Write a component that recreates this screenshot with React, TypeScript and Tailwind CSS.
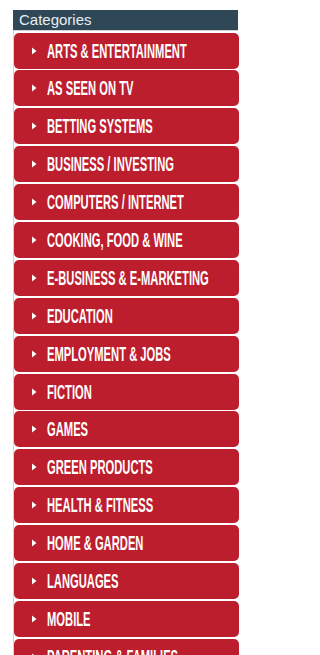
const categories = [
  "Arts & Entertainment",
  "As Seen On TV",
  "Betting Systems",
  "Business / Investing",
  "Computers / Internet",
  "Cooking, Food & Wine",
  "E-Business & E-Marketing",
  "Education",
  "Employment & Jobs",
  "Fiction",
  "Games",
  "Green Products",
  "Health & Fitness",
  "Home & Garden",
  "Languages",
  "Mobile",
  "Parenting & Families",
];

function Arrow() {
  return (
    <svg width="5" height="8" viewBox="0 0 5 8" className="shrink-0">
      <path d="M0 0.5 L4.5 4 L0 7.5 Z" fill="#ffffff" />
    </svg>
  );
}

export default function App() {
  return (
    <div className="h-[655px] w-[251px] overflow-hidden bg-white pt-[10px] pl-[13px]">
      <div className="w-[225px]">
        <div className="h-[20px] bg-[#2f4757] pl-[6px] text-[15px] leading-[20px] text-[#e6eef2] font-['Liberation_Sans',Arial,sans-serif]">
          Categories
        </div>
        <ul className="border-l border-t border-[#d2d2d2] pt-[1.5px]">
          {categories.map((name) => (
            <li
              key={name}
              className="mb-[1.9px] flex h-[36px] w-[225px] items-center overflow-hidden rounded-[5px] bg-[#bd1e2d] pl-[18px]"
            >
              <Arrow />
              <span className="ml-[10px] origin-left scale-x-[0.56] whitespace-nowrap text-[20px] font-bold uppercase text-white font-['Liberation_Sans',Arial,sans-serif]">
                {name}
              </span>
            </li>
          ))}
        </ul>
      </div>
    </div>
  );
}
